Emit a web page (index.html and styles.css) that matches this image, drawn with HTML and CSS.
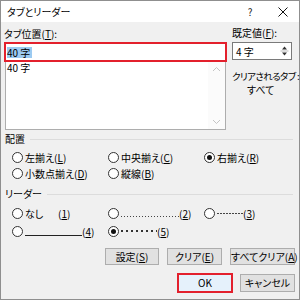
FILE: index.html
```html
<!DOCTYPE html>
<html lang="ja">
<head>
<meta charset="utf-8">
<title>タブとリーダー</title>
<link rel="stylesheet" href="styles.css">
</head>
<body>
<div class="window">
  <div class="titlebar">
    <span class="title">タブとリーダー</span>
    <span class="help">?</span>
    <span class="close"><svg width="10" height="10" viewBox="0 0 10 10"><path d="M0.5 0.5L9.5 9.5M9.5 0.5L0.5 9.5" stroke="#111" stroke-width="1"/></svg></span>
  </div>

  <div class="top">
    <div class="left">
      <div class="label">タブ位置(<u>T</u>):</div>
      <div class="input"><span class="sel">40 字</span></div>
      <div class="list">
        <div class="items"><div class="item">40 字</div></div>
        <div class="scroll">
          <svg width="9" height="6" viewBox="0 0 9 6"><path d="M1 5L4.5 1.5L8 5" fill="none" stroke="#c4c4c4" stroke-width="1"/></svg>
          <svg width="9" height="6" viewBox="0 0 9 6"><path d="M1 1L4.5 4.5L8 1" fill="none" stroke="#c4c4c4" stroke-width="1"/></svg>
        </div>
      </div>
    </div>
    <div class="right">
      <div class="label">既定値(<u>F</u>):</div>
      <div class="spin">
        <span class="spin-val">4 字</span>
        <div class="spin-btns">
          <svg width="9" height="16" viewBox="0 0 9 16"><path d="M2 6.5L4.5 3.5L7 6.5Z" fill="#333"/><path d="M2 9.5L4.5 12.5L7 9.5Z" fill="#333"/><path d="M0.5 8H8.5" stroke="#bbb" stroke-width="1"/></svg>
        </div>
      </div>
      <div class="note">クリアされるタブ :</div>
      <div class="note2">すべて</div>
    </div>
  </div>

  <div class="group-head group-align"><span>配置</span><div class="rule"></div></div>
  <div class="radios align-grid">
    <div class="opt"><span class="radio"></span>左揃え(<u>L</u>)</div>
    <div class="opt"><span class="radio"></span>中央揃え(<u>C</u>)</div>
    <div class="opt"><span class="radio on"></span>右揃え(<u>R</u>)</div>
    <div class="opt"><span class="radio"></span>小数点揃え(<u>D</u>)</div>
    <div class="opt"><span class="radio"></span>縦線(<u>B</u>)</div>
  </div>

  <div class="group-head leader-head"><span>リーダー</span><div class="rule"></div></div>
  <div class="radios leader-grid">
    <div class="opt"><span class="radio"></span><span class="none-text">なし</span>(<u>1</u>)</div>
    <div class="opt"><span class="radio"></span><span class="lead dots"></span>(<u>2</u>)</div>
    <div class="opt"><span class="radio"></span><span class="lead dashes"></span>(<u>3</u>)</div>
    <div class="opt"><span class="radio"></span><span class="lead solid"></span>(<u>4</u>)</div>
    <div class="opt"><span class="radio on"></span><span class="lead middots"></span>(<u>5</u>)</div>
  </div>

  <div class="btn-row">
    <button class="btn w54">設定(<u>S</u>)</button>
    <button class="btn w55">クリア(<u>E</u>)</button>
    <button class="btn w65">すべてクリア(<u>A</u>)</button>
  </div>
  <div class="btn-row ok-row">
    <button class="btn ok">OK</button>
    <button class="btn cancel">キャンセル</button>
  </div>
</div>
</body>
</html>
```

FILE: styles.css
```css
* { box-sizing: border-box; }
html, body { margin: 0; padding: 0; }
body {
  width: 300px;
  height: 300px;
  font-family: "Noto Sans CJK JP", "Noto Sans", sans-serif;
  font-size: 10px;
  font-feature-settings: "palt";
  color: #000;
  background: #fff;
}
u { text-underline-offset: 1px; }

.window {
  width: 300px;
  height: 300px;
  border: 1px solid #8f8f8f;
  background: #f0f0f0;
  display: flex;
  flex-direction: column;
}

.titlebar {
  height: 21px;
  flex: none;
  background: #fff;
  display: flex;
  align-items: center;
  padding-left: 6px;
  line-height: 14px;
}
.title { flex: 1; }
.help { width: 34px; text-align: center; color: #222; }
.close { width: 32px; display: flex; justify-content: center; }

.top {
  display: flex;
  gap: 5px;
  padding: 0 3px;
}
.left { width: 223px; display: flex; flex-direction: column; }
.right { width: 60px; display: flex; flex-direction: column; }

.label { line-height: 14px; height: 14px; margin-top: 5px; }
.right .label { margin-top: 4px; }

.input {
  margin-top: 1px;
  height: 20px;
  border: 2px solid #e3202c;
  background: #fff;
  display: flex;
  align-items: center;
  padding-left: 1px;
}
.sel {
  background: #9ccaf1;
  line-height: 11px;
  height: 11px;
  padding-right: 2px;
}

.list {
  margin: 0 1px;
  height: 68px;
  border: 1px solid #adadad;
  border-top: none;
  background: #fff;
  display: flex;
}
.items { flex: 1; padding-left: 1px; }
.item { line-height: 12px; }
.scroll {
  width: 17px;
  display: flex;
  flex-direction: column;
  justify-content: space-between;
  align-items: center;
  padding: 4px 0 4px;
  background: #fbfbfb;
}

.spin {
  margin-top: 2px;
  height: 18px;
  border: 1px solid #7a7a7a;
  background: #fff;
  display: flex;
  align-items: center;
}
.spin-val { flex: 1; padding-left: 3px; }
.spin-btns { width: 10px; display: flex; align-items: center; margin-right: 1px; }

.note {
  margin-top: 9px;
  line-height: 14px;
  white-space: nowrap;
  font-size: 9.5px;
  letter-spacing: -0.6px;
}
.note2 { line-height: 14px; padding-left: 15px; }

.group-head {
  display: flex;
  align-items: center;
  height: 14px;
  line-height: 14px;
  padding-left: 4px;
  padding-right: 6px;
}
.group-align { margin-top: 2px; }
.leader-head { margin-top: 6px; }
.rule { flex: 1; height: 1px; background: #dcdcdc; margin-left: 5px; }

.radios {
  display: grid;
  grid-template-columns: 96px 96px 1fr;
  grid-auto-rows: 16px;
  padding-left: 11px;
}
.align-grid { margin-top: 3px; }
.leader-grid { margin-top: 4px; row-gap: 2px; }

.opt { display: flex; align-items: center; white-space: nowrap; }
.radio {
  width: 11px;
  height: 11px;
  border: 1px solid #333;
  border-radius: 50%;
  background: #fff;
  margin-right: 2px;
  flex: none;
  display: flex;
  align-items: center;
  justify-content: center;
}
.radio.on::after {
  content: "";
  width: 5px;
  height: 5px;
  border-radius: 50%;
  background: #111;
}

.none-text { width: 33px; }
.lead { display: inline-block; flex: none; }
.dots {
  width: 58px;
  height: 1px;
  align-self: flex-end;
  margin-bottom: 4px;
  background: repeating-linear-gradient(to right, #444 0 1px, transparent 1px 3px);
}
.dashes {
  width: 26px;
  height: 1px;
  background: repeating-linear-gradient(to right, #444 0 2px, transparent 2px 3px);
}
.solid {
  width: 57px;
  height: 1px;
  align-self: flex-end;
  margin-bottom: 3px;
  background: #222;
}
.middots {
  width: 36px;
  height: 2px;
  background: repeating-linear-gradient(to right, #333 0 1.5px, transparent 1.5px 5px);
}

.btn-row {
  display: flex;
  justify-content: flex-end;
  gap: 8px;
  padding-right: 4px;
  margin-top: 9px;
}
.btn {
  font: inherit;
  font-feature-settings: "palt";
  height: 17px;
  padding: 0;
  background: #e1e1e1;
  border: 1px solid #adadad;
  color: #000;
  line-height: 14px;
  white-space: nowrap;
}
.w54 { width: 54px; }
.w55 { width: 55px; }
.w65 { width: 65px; }

.ok-row { margin-top: 8px; gap: 7px; align-items: center; }
.ok {
  width: 56px;
  height: 20px;
  background: #e5f1fb;
  border: 2px solid #e3202c;
}
.cancel { width: 55px; height: 18px; }
```
